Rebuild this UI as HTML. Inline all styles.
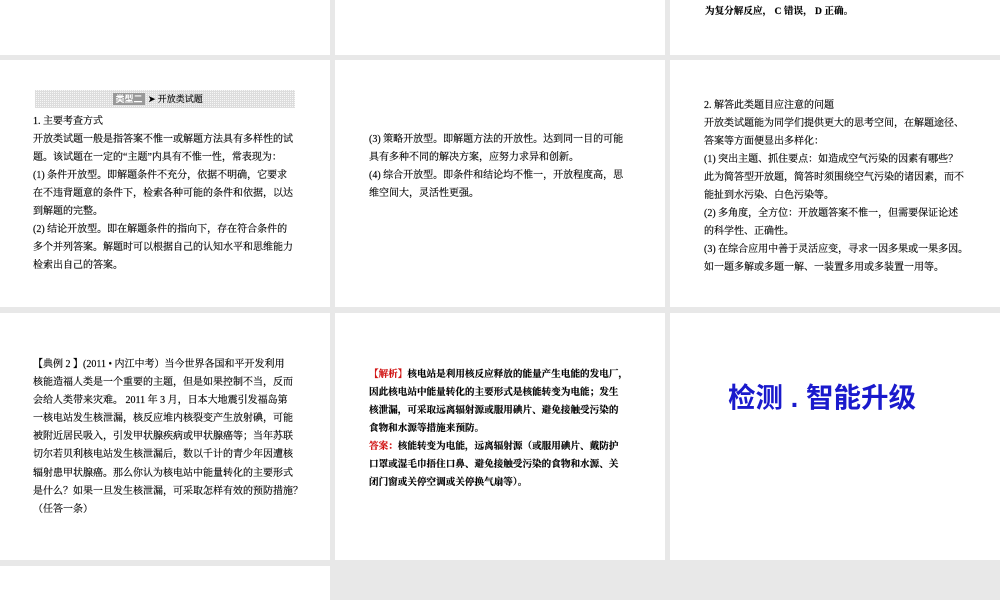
<!DOCTYPE html>
<html><head><meta charset="utf-8"><style>
body{margin:0;width:1000px;height:600px;background:#e8e8e8;position:relative;overflow:hidden;font-family:"Liberation Sans","Noto Sans CJK SC",sans-serif;color:#000}
.p{position:absolute;background:#fff}
.t{position:absolute;font-size:10px;line-height:18px;white-space:nowrap;font-family:"Liberation Serif","Noto Serif CJK SC","Noto Sans CJK SC",serif;color:#000;-webkit-text-stroke:0.15px #000}
.s{font-family:"Liberation Serif","Noto Serif CJK SC",serif;font-size:9.6px}
.r{color:#d01010;-webkit-text-stroke:0.15px #d01010}
</style></head><body>
<div class="p" style="left:0;top:0;width:330px;height:55px"></div>
<div class="p" style="left:335px;top:0;width:330px;height:55px"></div>
<div class="p" style="left:670px;top:0;width:330px;height:55px"></div>
<div class="p" style="left:0;top:60px;width:330px;height:247px"></div>
<div class="p" style="left:335px;top:60px;width:330px;height:247px"></div>
<div class="p" style="left:670px;top:60px;width:330px;height:247px"></div>
<div class="p" style="left:0;top:313px;width:330px;height:247px"></div>
<div class="p" style="left:335px;top:313px;width:330px;height:247px"></div>
<div class="p" style="left:670px;top:313px;width:330px;height:247px"></div>
<div class="p" style="left:0;top:566px;width:330px;height:34px"></div>

<div class="t s" style="left:705px;top:3px;font-weight:bold">为复分解反应， C 错误， D 正确。</div>

<div style="position:absolute;left:35px;top:90px;width:260px;height:18px;background:repeating-linear-gradient(90deg,#ddd 0 1px,transparent 1px 2px),repeating-linear-gradient(0deg,#ddd 0 1px,#f7f7f7 1px 2px)"></div>
<div style="position:absolute;left:113px;top:93px;width:32px;height:12px;background:#999;color:#fff;font-size:9px;line-height:12px;text-align:center;font-weight:bold">类型二</div>
<div class="t" style="left:148px;top:90px;font-size:9px">➤ 开放类试题</div>

<div class="t" style="left:33px;top:113px">1. 主要考查方式<br>开放类试题一般是指答案不惟一或解题方法具有多样性的试<br>题。该试题在一定的“主题”内具有不惟一性，常表现为：<br>(1) 条件开放型。即解题条件不充分，依据不明确，它要求<br>在不违背题意的条件下，检索各种可能的条件和依据，以达<br>到解题的完整。<br>(2) 结论开放型。即在解题条件的指向下，存在符合条件的<br>多个并列答案。解题时可以根据自己的认知水平和思维能力<br>检索出自己的答案。</div>

<div class="t" style="left:369px;top:131px">(3) 策略开放型。即解题方法的开放性。达到同一目的可能<br>具有多种不同的解决方案，应努力求异和创新。<br>(4) 综合开放型。即条件和结论均不惟一，开放程度高，思<br>维空间大，灵活性更强。</div>

<div class="t" style="left:704px;top:97px">2. 解答此类题目应注意的问题<br>开放类试题能为同学们提供更大的思考空间，在解题途径、<br>答案等方面便显出多样化：<br>(1) 突出主题、抓住要点：如造成空气污染的因素有哪些？<br>此为简答型开放题，简答时须围绕空气污染的诸因素，而不<br>能扯到水污染、白色污染等。<br>(2) 多角度，全方位：开放题答案不惟一，但需要保证论述<br>的科学性、正确性。<br>(3) 在综合应用中善于灵活应变，寻求一因多果或一果多因。<br>如一题多解或多题一解、一装置多用或多装置一用等。</div>

<div class="t" style="left:33px;top:356px;line-height:18.1px">【典例 2 】(2011 • 内江中考）当今世界各国和平开发利用<br>核能造福人类是一个重要的主题，但是如果控制不当，反而<br>会给人类带来灾难。 2011 年 3 月，日本大地震引发福岛第<br>一核电站发生核泄漏，核反应堆内核裂变产生放射碘，可能<br>被附近居民吸入，引发甲状腺疾病或甲状腺癌等；当年苏联<br>切尔若贝利核电站发生核泄漏后，数以千计的青少年因遭核<br>辐射患甲状腺癌。那么你认为核电站中能量转化的主要形式<br>是什么？如果一旦发生核泄漏，可采取怎样有效的预防措施？<br>（任答一条）</div>

<div class="t s" style="left:369px;top:366px;font-weight:bold"><span class="r">【解析】</span>核电站是利用核反应释放的能量产生电能的发电厂，<br>因此核电站中能量转化的主要形式是核能转变为电能；发生<br>核泄漏，可采取远离辐射源或服用碘片、避免接触受污染的<br>食物和水源等措施来预防。<br><span class="r">答案：</span>核能转变为电能，远离辐射源（或服用碘片、戴防护<br>口罩或湿毛巾捂住口鼻、避免接触受污染的食物和水源、关<br>闭门窗或关停空调或关停换气扇等）。</div>

<div style="position:absolute;left:670px;top:381px;width:304px;text-align:center;font-size:27.5px;line-height:34px;font-weight:bold;color:#1a1acc;font-family:'Liberation Sans','Noto Sans CJK SC',sans-serif">检测 . 智能升级</div>
</body></html>
